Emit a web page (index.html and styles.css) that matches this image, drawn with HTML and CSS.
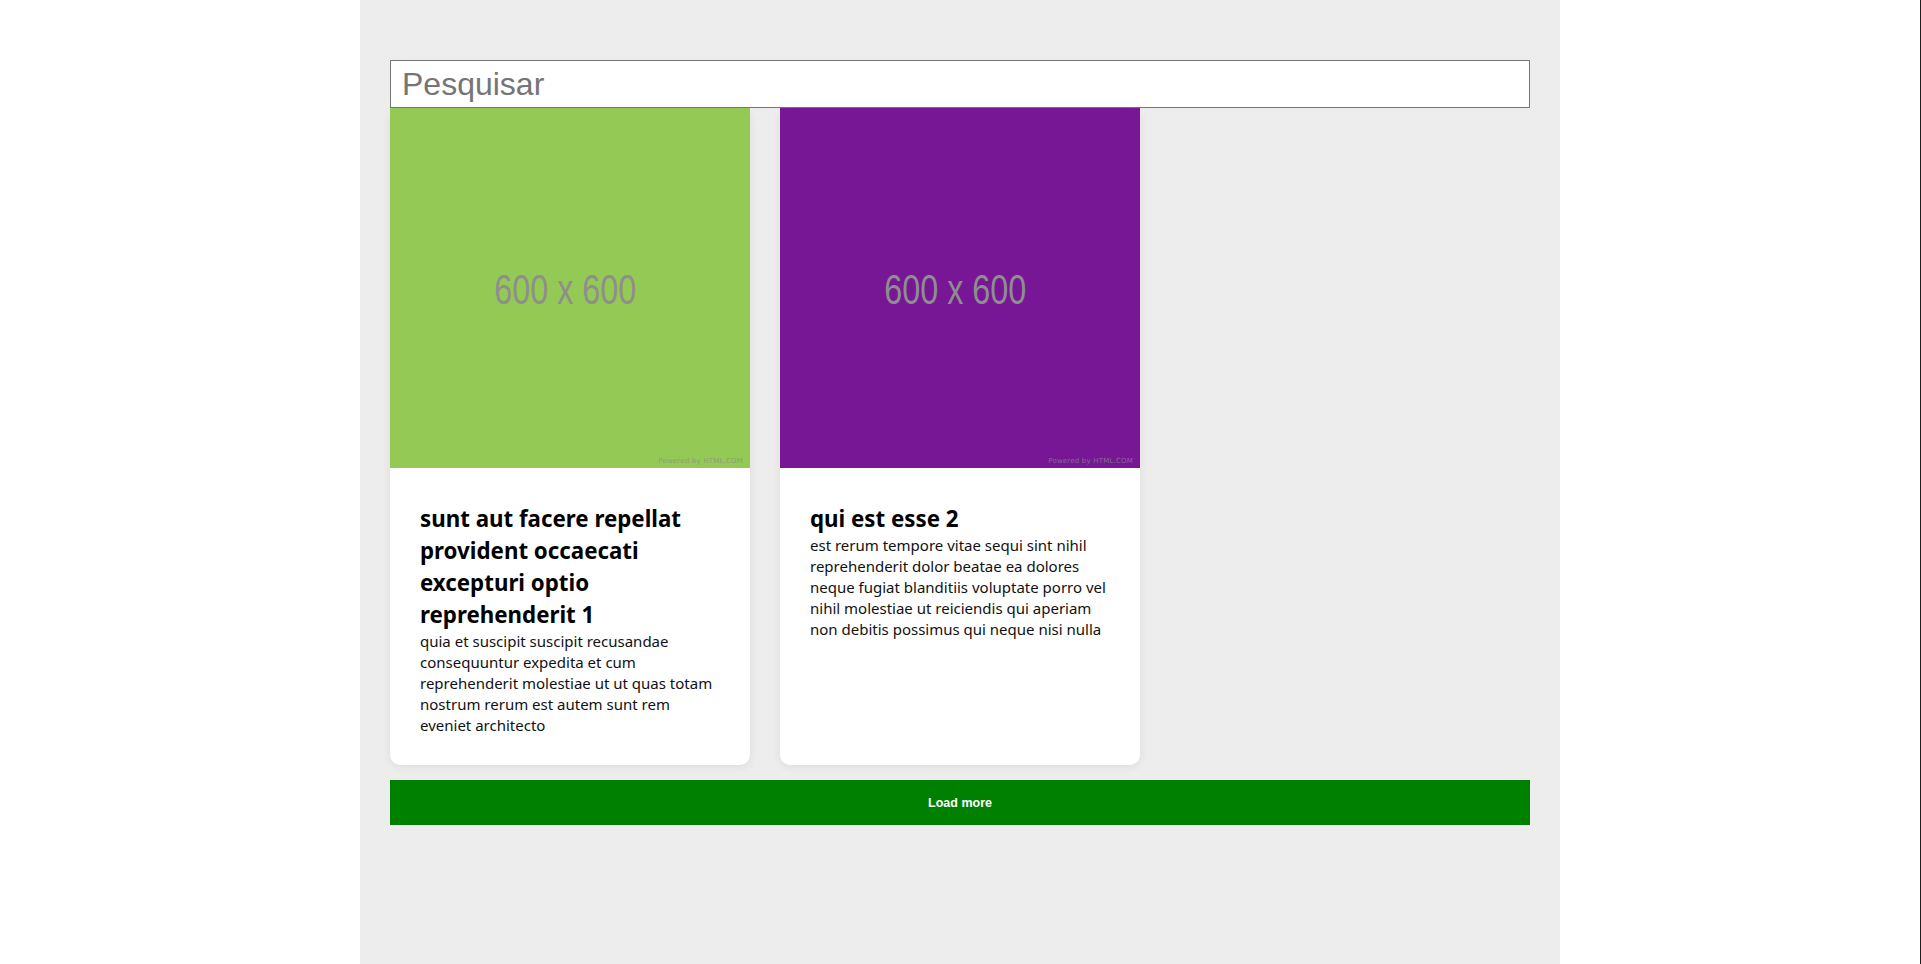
FILE: index.html
```html
<!DOCTYPE html>
<html lang="pt">
<head>
<meta charset="utf-8">
<title>Posts</title>
<link rel="stylesheet" href="styles.css">
</head>
<body>
<main class="page">
  <input class="search" type="text" placeholder="Pesquisar">
  <section class="grid">
    <article class="card">
      <div class="thumb thumb-green">
        <span class="thumb-label">600 x 600</span>
        <span class="thumb-credit">Powered by HTML.COM</span>
      </div>
      <div class="card-body">
        <h2 class="card-title">sunt aut facere repellat provident occaecati excepturi optio reprehenderit 1</h2>
        <p class="card-text">quia et suscipit suscipit recusandae consequuntur expedita et cum reprehenderit molestiae ut ut quas totam nostrum rerum est autem sunt rem eveniet architecto</p>
      </div>
    </article>
    <article class="card">
      <div class="thumb thumb-purple">
        <span class="thumb-label">600 x 600</span>
        <span class="thumb-credit">Powered by HTML.COM</span>
      </div>
      <div class="card-body">
        <h2 class="card-title">qui est esse 2</h2>
        <p class="card-text">est rerum tempore vitae sequi sint nihil reprehenderit dolor beatae ea dolores neque fugiat blanditiis voluptate porro vel nihil molestiae ut reiciendis qui aperiam non debitis possimus qui neque nisi nulla</p>
      </div>
    </article>
  </section>
  <button class="load-more" type="button">Load more</button>
</main>
</body>
</html>
```
FILE: styles.css
```css
html {
  border-right: 1px solid #1e1e1e;
  background: #fff;
}
body {
  margin: 0;
  background: #fff;
}
.page {
  width: 1200px;
  margin: 0 auto;
  min-height: 100vh;
  box-sizing: border-box;
  background: #ededed;
  padding: 60px 30px;
  display: flex;
  flex-direction: column;
}
.search {
  display: block;
  width: 100%;
  height: 48px;
  box-sizing: border-box;
  border: 1px solid #767676;
  padding: 0 10px 0 11px;
  font-family: "Liberation Sans", Arial, sans-serif;
  font-size: 32px;
  color: #000;
  background: #fff;
  outline: none;
}
.search::placeholder {
  color: #757575;
}
.grid {
  display: grid;
  grid-template-columns: repeat(3, 360px);
  column-gap: 30px;
}
.card {
  background: #fff;
  border-radius: 10px;
  box-shadow: 0 2px 10px rgba(0, 0, 0, 0.07);
  display: flex;
  flex-direction: column;
}
.thumb {
  position: relative;
  width: 360px;
  height: 360px;
  display: flex;
  align-items: center;
  justify-content: center;
}
.thumb-green { background: #93c954; }
.thumb-purple { background: #771796; }
.thumb-label {
  font-family: "Liberation Sans", Arial, sans-serif;
  font-size: 42px;
  color: #8e8e8e;
  transform: translate(-5px, 2px) scaleX(0.77);
}
.thumb-credit {
  position: absolute;
  right: 7px;
  bottom: 3px;
  font-family: "DejaVu Sans", sans-serif;
  font-size: 7px;
  letter-spacing: 0.2px;
  color: rgba(140, 140, 140, 0.75);
}
.card-body {
  padding: 30px 30px 29px;
  font-family: "Noto Sans", sans-serif;
  color: #000;
}
.card-title {
  margin: 5px 0 0;
  font-size: 22.3px;
  font-weight: 700;
  line-height: 32px;
}
.card-text {
  margin: 0;
  font-size: 15px;
  line-height: 21px;
  color: #111;
}
.load-more {
  margin-top: 15px;
  width: 100%;
  height: 45px;
  border: none;
  background: #008000;
  color: #fff;
  font-family: "Liberation Sans", Arial, sans-serif;
  font-size: 12.5px;
  font-weight: 700;
  cursor: pointer;
}
```
